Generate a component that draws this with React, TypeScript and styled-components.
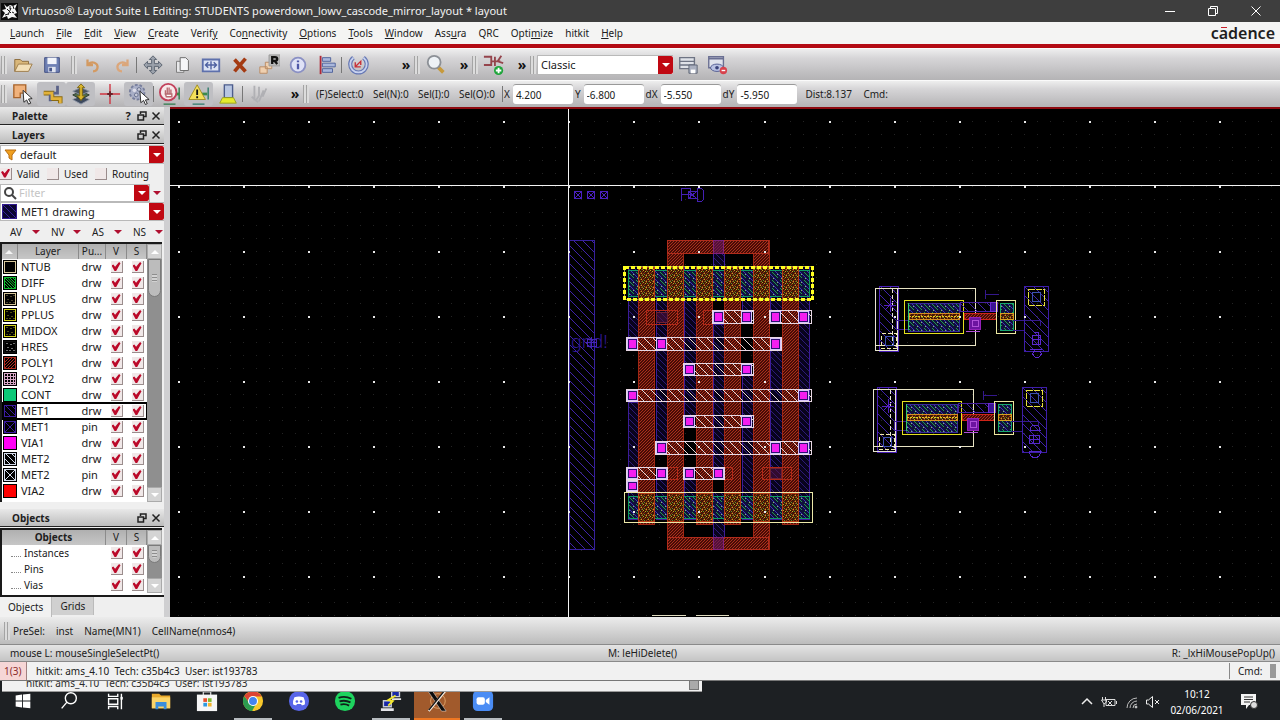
import React from "react";
import styled, { createGlobalStyle, css } from "styled-components";

const GlobalStyle = createGlobalStyle`
  * { box-sizing: border-box; }
  html, body { margin: 0; padding: 0; }
  body, button, input, select {
    font-family: "Noto Sans", "Open Sans", sans-serif;
    font-size: 10px;
    line-height: 16px;
    color: #202020;
  }
  button { border: 0; padding: 0; background: none; }
`;

const Screen = styled.div`
  display: flex;
  flex-direction: column;
  height: 100vh;
  overflow: hidden;
  background: #ececec;
`;

/* ---------- window title and menus ---------- */

const TitleBar = styled.header`
  display: flex;
  align-items: center;
  flex: none;
  height: 22px;
  padding: 0 5px 0 1px;
  gap: 4px;
  background: #3e3e3e;
  color: #f2f2f2;
`;

const Title = styled.h1`
  flex: 1;
  margin: 0;
  font-size: 11px;
  font-weight: 400;
  white-space: nowrap;
`;

const WindowButton = styled.button`
  display: flex;
  align-items: center;
  justify-content: center;
  width: 39px;
  height: 20px;
  color: #fff;
`;

const MenuBar = styled.nav`
  display: flex;
  align-items: center;
  flex: none;
  height: 26px;
  padding: 0 5px 0 4px;
  background: #f4f4f3;
  border-bottom: 4px solid #b30a14;
`;

const MenuButton = styled.button`
  padding: 0 6px;
  line-height: 20px;
  white-space: nowrap;
`;

const Logo = styled.span`
  position: relative;
  margin-left: auto;
  font-size: 16px;
  font-weight: 600;
  line-height: 22px;
  color: #1e1e1e;
  &::after {
    content: "";
    position: absolute;
    left: 10px;
    top: 5px;
    width: 6px;
    height: 1px;
    background: #c8202c;
  }
`;

/* ---------- tool bars ---------- */

const ToolBar = styled.div<{ $h: number }>`
  display: flex;
  align-items: center;
  flex: none;
  height: ${(p) => p.$h}px;
  background: linear-gradient(#eeeeee, #d6d5d7 30%, #b4b3b5);
  border-top: 1px solid #fafafa;
`;

const ToolGroup = styled.div<{ $w?: number; $gap?: number }>`
  display: flex;
  align-items: center;
  flex: none;
  gap: ${(p) => p.$gap ?? 0}px;
  ${(p) => p.$w && css`width: ${p.$w}px;`}
`;

const Grip = styled.span`
  flex: none;
  width: 6px;
  height: 18px;
  margin: 0 1px;
  background: repeating-linear-gradient(90deg, #a4a4a4 0 1px, #dcdcdc 1px 3px);
`;

const Divider = styled.span`
  flex: none;
  width: 1px;
  height: 16px;
  margin: 0 1px 0 0;
  background: #777;
`;

const ToolButton = styled.button<{ $on?: boolean }>`
  display: flex;
  align-items: center;
  justify-content: center;
  flex: none;
  width: 29px;
  height: 24px;
  border-radius: 3px;
  background: ${(p) => (p.$on ? "#bfbfc3" : "none")};
`;

const MoreButton = styled.button`
  margin-left: auto;
  width: 14px;
  font-size: 14px;
  font-weight: 700;
  line-height: 18px;
  color: #111;
`;

const Readout = styled.span<{ $w: number }>`
  width: ${(p) => p.$w}px;
  white-space: nowrap;
`;

const Readings = styled.div`
  display: flex;
  padding-left: 6px;
`;

const CoordLabel = styled.label`
  display: flex;
  align-items: center;
  gap: 3px;
`;

const CoordInput = styled.input`
  width: 60px;
  height: 20px;
  padding: 0 3px;
  border: 0;
  border-top: 1px solid #999;
  border-radius: 3px;
  background: #fff;
`;

/* ---------- combo boxes ---------- */

const ComboFrame = styled.div<{ $h: number; $w?: number }>`
  display: flex;
  align-items: stretch;
  flex: none;
  height: ${(p) => p.$h}px;
  ${(p) => p.$w && css`width: ${p.$w}px;`}
  background: #fff;
  border: 1px solid #b9b9b9;
  border-right: 0;
`;

const Select = styled.select`
  flex: 1;
  min-width: 0;
  appearance: none;
  border: 0;
  padding: 0 0 0 3px;
  font-size: 11px;
  background: transparent;
`;

const RedArrow = styled.span`
  display: flex;
  align-items: center;
  align-self: stretch;
  justify-content: center;
  flex: none;
  width: 15px;
  border-radius: 0 2px 2px 0;
  background: #c00812;
  &::after {
    content: "";
    border: 4px solid transparent;
    border-top-color: #fff;
    border-bottom: 0;
  }
`;

const SmallArrow = styled.span`
  border: 4px solid transparent;
  border-top-color: #b01030;
  border-bottom: 0;
`;

/* ---------- left dock ---------- */

const Workspace = styled.main`
  display: flex;
  flex: 1;
  min-height: 0;
`;

const Dock = styled.aside`
  display: flex;
  flex-direction: column;
  flex: none;
  width: 170px;
  background: #efefef;
  border-right: 6px solid #cfcfd1;
`;

const DockHead = styled.div`
  display: flex;
  align-items: center;
  flex: none;
  height: 18px;
  margin-bottom: 1px;
  padding: 0 1px 0 12px;
  background: linear-gradient(#e8e8e8, #bdbdbd);
  border-bottom: 1px solid #222;
`;

const DockTitle = styled.h2`
  flex: 1;
  margin: 0;
  font-size: 10px;
  font-weight: 700;
`;

const DockButton = styled.button`
  display: flex;
  align-items: center;
  justify-content: center;
  width: 14px;
  height: 14px;
  font-size: 11px;
  font-weight: 700;
`;

const DockRow = styled.div<{ $h: number }>`
  display: flex;
  align-items: center;
  flex: none;
  height: ${(p) => p.$h}px;
`;

const CheckLabel = styled.label<{ $w: number }>`
  display: flex;
  align-items: center;
  gap: 5px;
  width: ${(p) => p.$w}px;
`;

const Check = styled.input`
  appearance: none;
  display: block;
  flex: none;
  width: 12px;
  height: 12px;
  margin: 0;
  padding: 1px;
  background: #f0e8e8;
  border: 0 solid #9a8c8c;
  border-width: 0 1px 1px 0;
  &:checked::before {
    content: "";
    display: block;
    width: 9px;
    height: 9px;
    background: #bb0a2a;
    clip-path: polygon(0 40%, 20% 28%, 40% 52%, 84% 0, 100% 14%, 52% 100%, 34% 100%);
  }
`;

const FilterBox = styled.label`
  display: flex;
  align-items: center;
  flex: 1;
  min-width: 0;
  height: 18px;
  padding-left: 2px;
  background: #fff;
  border: 1px solid #b9b9b9;
`;

const FilterInput = styled.input`
  flex: 1;
  min-width: 0;
  border: 0;
  padding: 0 2px;
  font-size: 11px;
  background: transparent;
  &::placeholder { color: #c4c4c4; }
`;

const VisButton = styled.button`
  display: flex;
  align-items: center;
  justify-content: space-between;
  width: 41px;
  padding: 0 1px 0 10px;
`;

const ListFrame = styled.div<{ $grow?: boolean }>`
  display: flex;
  flex: ${(p) => (p.$grow ? "1 1 0" : "none")};
  min-height: 0;
  overflow: hidden;
  padding-bottom: ${(p) => (p.$grow ? 0 : 2)}px;
  background: #fff;
  border-top: 2px solid #1a1a1a;
  border-left: 2px solid #1a1a1a;
  margin-right: 2px;
`;

const ListTable = styled.table`
  flex: 1;
  height: max-content;
  border-collapse: collapse;
  table-layout: fixed;
  width: 146px;
`;

const HeadCell = styled.th<{ $w?: number; $bold?: boolean }>`
  ${(p) => p.$w && css`width: ${p.$w}px;`}
  height: 15px;
  padding: 0;
  font-weight: ${(p) => (p.$bold ? 700 : 400)};
  line-height: 15px;
  background: linear-gradient(#b0b0b0, #c6c6c6);
  border-right: 1px solid #8b8b8b;
  overflow: hidden;
`;

const SortMark = styled.span`
  display: block;
  width: 8px;
  margin: 0 auto;
  border: 4px solid transparent;
  border-top: 0;
  border-bottom-color: #f4f4f4;
`;

const Row = styled.tr<{ $selected?: boolean }>`
  ${(p) => p.$selected && css`outline: 2px solid #000; outline-offset: -1px;`}
`;

const Cell = styled.td<{ $pad?: number }>`
  height: 16px;
  padding: 0 0 0 ${(p) => p.$pad ?? 0}px;
  font-size: 11px;
  line-height: 16px;
  white-space: nowrap;
`;

const TreeCell = styled(Cell)`
  font-size: 10px;
  &::before {
    content: "";
    display: inline-block;
    width: 10px;
    height: 4px;
    margin-right: 3px;
    border-bottom: 1px dotted #888;
    vertical-align: middle;
  }
`;

const ScrollTrack = styled.div`
  display: flex;
  flex-direction: column;
  flex: none;
  width: 15px;
  background: #8f8f8f;
`;

const ScrollButton = styled.button<{ $up?: boolean }>`
  display: flex;
  align-items: center;
  justify-content: center;
  height: 15px;
  background: #d4d4d4;
  border: 1px solid #aaa;
  ${(p) => !p.$up && css`margin-top: auto;`}
  &::after {
    content: "";
    border: 4px solid transparent;
    ${(p) => (p.$up ? css`border-bottom-color: #fff; border-top: 0;` : css`border-top-color: #fff; border-bottom: 0;`)}
  }
`;

const ScrollThumb = styled.div<{ $h: number }>`
  height: ${(p) => p.$h}px;
  margin: 0 1px;
  padding: ${(p) => (p.$h > 20 ? 14 : 4)}px 3px;
  background: repeating-linear-gradient(#8d8d8d 0 1px, #d2d2d2 1px 3px) content-box, #bcbcbc;
  border: 1px solid #7a7a7a;
  border-radius: 0 0 7px 7px;
`;

const Tabs = styled.div`
  display: flex;
  flex: none;
  height: 22px;
  border-top: 2px solid #1a1a1a;
`;

const Tab = styled.button<{ $active?: boolean }>`
  padding: 0 8px;
  height: ${(p) => (p.$active ? 20 : 18)}px;
  background: ${(p) => (p.$active ? "#f1f1f1" : "#d0d0d0")};
  border-right: 1px solid #bbb;
`;

const CanvasPane = styled.section`
  flex: 1;
  min-width: 0;
  background: #000;
  border-top: 2px solid #8e0a10;
  svg { display: block; width: 100%; height: 100%; }
`;

/* ---------- status lines ---------- */

const InfoBar = styled.div`
  display: flex;
  align-items: center;
  flex: none;
  height: 28px;
  padding-left: 3px;
  gap: 2px;
  background: linear-gradient(#ececec, #bcbcbc);
  border-bottom: 1px solid #8a8a8a;
`;

const InfoFields = styled.div`
  display: flex;
  gap: 11px;
`;

const MouseBar = styled.div`
  display: grid;
  grid-template-columns: 1fr auto 1fr;
  align-items: center;
  flex: none;
  height: 17px;
  padding: 0 5px 0 10px;
  background: linear-gradient(#e4e4e4, #c4c4c4);
  border-bottom: 1px solid #8a8a8a;
  span:last-child { text-align: right; }
`;

const StatusBar = styled.div`
  display: flex;
  align-items: center;
  flex: none;
  height: 19px;
  background: #f1f1f1;
  border-bottom: 1px solid #777;
`;

const Counter = styled.span`
  width: 27px;
  padding-left: 4px;
  margin-right: 9px;
  line-height: 18px;
  color: #8c2b2b;
  background: #f6d6d6;
  border-right: 1px solid #a08080;
`;

const CmdBox = styled.span`
  display: flex;
  align-items: center;
  margin-left: auto;
  width: 51px;
  padding-left: 8px;
  border-left: 1px solid #888;
  &::after {
    content: "";
    width: 6px;
    height: 14px;
    margin-left: auto;
    margin-right: 4px;
    background: #999;
  }
`;

/* ---------- task bar ---------- */

const TaskBar = styled.footer`
  position: relative;
  display: flex;
  align-items: center;
  flex: none;
  height: 39px;
  background: #1d2023;
  color: #f4f4f4;
`;

const BackWindow = styled.div`
  position: absolute;
  left: 2px;
  top: 0;
  width: 700px;
  height: 11px;
  display: flex;
  align-items: flex-end;
  overflow: hidden;
  padding-left: 24px;
  background: #f1f1f1;
  border-bottom: 1px solid #999;
  color: #2c2c2c;
  &::after {
    content: "";
    width: 8px;
    height: 8px;
    margin: 0 3px 1px auto;
    background: #aaa;
    border: 1px solid #777;
  }
`;

const TaskButton = styled.button<{ $state?: "open" | "active" }>`
  display: flex;
  align-items: center;
  justify-content: center;
  width: 46px;
  height: 39px;
  padding-top: 3px;
  border-bottom: 2px solid transparent;
  ${(p) => p.$state === "open" && css`
    background: linear-gradient(#b7bcc0, #b7bcc0) center bottom / 38px 2px no-repeat border-box;
  `}
  ${(p) => p.$state === "active" && css`background: #a15a2c; border-bottom-color: #ee7722;`}
`;

const Tray = styled.div`
  display: flex;
  align-items: center;
  margin-left: auto;
  padding: 2px 22px 0 0;
  gap: 6px;
`;

const Clock = styled.time`
  width: 60px;
  margin-right: 7px;
  color: #fff;
  text-align: center;
  white-space: pre-line;
`;

/* ---------- icons ---------- */

const glyphs: Record<string, React.ReactNode> = {
  open: (<><path d="M3 19V6h6l2 2h7v3" fill="#d9b77a" stroke="#8a6a3a" /><path d="M3 19l4-8h15l-4 8z" fill="#f2dfb8" stroke="#9a7a48" /></>),
  save: (<><path d="M4 4h16v16H4z" fill="#6f80b4" stroke="#3d4c80" /><path d="M7 4h10v7H7z" fill="#f2f4fa" /><path d="M8 14h8v6H8z" fill="#dfe3ee" /><path d="M9 15h3v4H9z" fill="#46558a" /></>),
  undo: (<path d="M6 6v6h6M7 11c4-4 10-1 10 3 0 3-2 5-5 5" fill="none" stroke="#d39a62" strokeWidth="2.500" />),
  redo: (<path d="M18 6v6h-6M17 11c-4-4-10-1-10 3 0 3 2 5 5 5" fill="none" stroke="#dba67a" strokeWidth="2.500" />),
  move: (<path d="M12 2l4 4h-2.500v4.500H18V8l4 4-4 4v-2.500h-4.500V18H16l-4 4-4-4h2.500v-4.500H6V16l-4-4 4-4v2.500h4.500V6H8z" fill="#9ba1ab" stroke="#59616e" />),
  copy: (<><path d="M6 8h8v12H6z" fill="#e8e8ea" stroke="#777" /><path d="M10 4h6l3 3v11h-9z" fill="#f6f6f8" stroke="#666" /></>),
  stretch: (<><path d="M3 6h18v13H3z" fill="#dce3f4" stroke="#5e70ac" strokeWidth="2" /><path d="M6 12h12M9 9l-3 3 3 3M15 9l3 3-3 3M12 8v9" fill="none" stroke="#4d60a0" strokeWidth="1.500" /></>),
  remove: (<path d="M6 6l12 13M18 5L6 19" stroke="#a43a12" strokeWidth="4" />),
  repeat: (<><path d="M2 14h8v7H2zM8 9h7v7H8z" fill="#efd0b0" stroke="#b98a60" /><path d="M12 1h12v12H12z" fill="#b9b9b9" stroke="#999" /><path d="M15.500 11V3.500h3q2.500 0 2.500 2t-2.500 2h-3M18 7.500l3 3.500" fill="none" stroke="#111" strokeWidth="2.500" /></>),
  info: (<><circle cx="12" cy="12" r="8" fill="#dfe2f6" stroke="#8a90c4" strokeWidth="2" /><path d="M12 10.500v6M12 7v2" stroke="#5058a8" strokeWidth="2.500" /></>),
  align: (<><path d="M5 2v20" stroke="#b02838" strokeWidth="2" /><path d="M7 4h9v4H7zM7 10h14v4H7zM7 16h11v4H7z" fill="#a9b7dc" stroke="#4c5f9a" /></>),
  rotate: (<><path d="M7 4a9 9 0 1 0 11 0" fill="none" stroke="#6577b4" strokeWidth="4.500" /><path d="M7 4a9 9 0 1 0 11 0" fill="none" stroke="#c8d2ee" strokeWidth="2" /><path d="M9 9v5h6M9 14l6-6v4" fill="none" stroke="#c83038" strokeWidth="1.500" /></>),
  zoom: (<><path d="M14 14l6 6" stroke="#c79a3c" strokeWidth="4" /><circle cx="10" cy="9" r="7" fill="#eef2f6" stroke="#8c9096" strokeWidth="2" /></>),
  wire: (<><path d="M1 3h8v9H1M9 8h10M13 3v10M20 2l-4 6 6 2" fill="none" stroke="#95444c" strokeWidth="2" /><circle cx="17" cy="18" r="5" fill="#1ea53a" /><path d="M14 18h6M17 15v6" stroke="#fff" strokeWidth="2" /></>),
  sheetSave: (<><path d="M3 4h16v12H3z" fill="#dfe2e8" stroke="#6e7484" strokeWidth="1.500" /><path d="M3 8h16M3 12h16" stroke="#6e7484" strokeWidth="1.500" /><path d="M13 12h9v9h-9z" fill="#aab0c0" stroke="#5d6474" /><path d="M15 17h5v4h-5z" fill="#fff" /></>),
  sheetEye: (<><path d="M3 3h16v12H3z" fill="#dfe2ec" stroke="#6a6f92" strokeWidth="1.500" /><path d="M3 5h16" stroke="#6a6f92" strokeWidth="2" /><ellipse cx="12" cy="15" rx="7" ry="4" fill="#b9c2e4" stroke="#4e588e" /><circle cx="12" cy="15" r="2" fill="#39427a" /><circle cx="19" cy="18" r="4" fill="#d8424c" /><path d="M17 18h4" stroke="#fff" strokeWidth="1.500" /></>),
  pick: (<><path d="M2 2h13v9H9v5H2z" fill="#f0b27c" stroke="#a8642c" strokeWidth="1.500" /><path d="M12 8l10 9-4 .5 2.500 4.500-2.500 1-2-4.500-3 2.500z" fill="#fff" stroke="#222" /></>),
  route: (<><path d="M3 11h9v6h9v5" fill="none" stroke="#8a6a10" strokeWidth="5" /><path d="M18 3v8h-8v9" fill="none" stroke="#5a6288" strokeWidth="3" /><path d="M3 11h9v6h9v5" fill="none" stroke="#e2b23a" strokeWidth="3" /></>),
  layers: (<><path d="M12 14l9 4-9 5-9-5z" fill="#3e4a5e" stroke="#8a93a4" /><path d="M12 9l9 4-9 5-9-5z" fill="#4e6a4e" stroke="#2c3a2c" /><path d="M12 5l9 4-9 4-9-4z" fill="#4a5460" stroke="#8a93a4" /><path d="M12 1l4 4h-2.500v9H16l-4 5-4-5h2.500V5H8z" fill="#d9b52c" stroke="#7a6412" /></>),
  cross: (<><path d="M12 1v22M1 12h22" stroke="#cf3440" strokeWidth="1.500" /><path d="M9 12h6M12 9v6" stroke="#6a2028" strokeWidth="2" /></>),
  gear: (<><circle cx="10" cy="10" r="8" fill="#a8aec6" stroke="#777e9c" strokeDasharray="3 2" strokeWidth="2" /><circle cx="7" cy="8" r="2" fill="#dcdce8" /><circle cx="12" cy="7" r="2" fill="#c8cad8" stroke="#666e8c" /><circle cx="9" cy="13" r="2" fill="#c8cad8" stroke="#666e8c" /><path d="M13 9l10 9-4 .5 2 4-2 1-2-4.500-3 2.500z" fill="#fff" stroke="#222" /></>),
  stop: (<><path d="M22 5v13M5 23h13" stroke="#2d7a4a" strokeWidth="1.500" /><path d="M17 12h5" stroke="#3b8a4a" strokeWidth="3" /><circle cx="10" cy="10" r="9" fill="#f7e9ea" stroke="#c2405a" strokeWidth="2" /><path d="M7 13V8M9 12V5M11 12V5M13 12V7M7 12h7v3h-6z" stroke="#b86a70" strokeWidth="1.500" fill="#fff" /></>),
  warn: (<><path d="M22 5v13M5 23h13" stroke="#2d7a6a" strokeWidth="1.500" /><path d="M15 12h6" stroke="#3b8a4a" strokeWidth="3" /><path d="M10 2l9 16H1z" fill="#f5e05a" stroke="#a08c1c" /><path d="M10 7v6M10 14.500v2" stroke="#111" strokeWidth="2" /></>),
  marker: (<><path d="M8 2h9v14H8z" fill="#b8c6e2" stroke="#4c5c8c" strokeWidth="1.500" /><path d="M6 16h12l3 6H3z" fill="#e6ea2c" stroke="#98a01c" /></>),
  pens: (<path d="M7 3v16M4 15l7 6M12 4v10l-4 6M17 8l-5 12M20 6l-4 9" fill="none" stroke="#b0b0b4" strokeWidth="2" />),
};

function Glyph({ name, size = 22 }: { name: string; size?: number }) {
  return <svg width={size} height={size} viewBox="0 0 24 24" aria-hidden="true">{glyphs[name]}</svg>;
}

function Tool({ name, on }: { name: string; on?: boolean }) {
  return <ToolButton $on={on} aria-label={name}><Glyph name={name} /></ToolButton>;
}

const FloatIcon = () => (
  <svg width="10" height="10" viewBox="0 0 10 10" fill="none" stroke="#222" strokeWidth="1.500">
    <path d="M3.500 3V1H9v4.500H7M1 4h5.500v5H1z" />
  </svg>
);
const CloseIcon = () => (
  <svg width="10" height="10" viewBox="0 0 10 10" stroke="#222" strokeWidth="1.500"><path d="M1.500 1.500l7 7M8.500 1.500l-7 7" /></svg>
);

/* ---------- layer list ---------- */

type Fill = "box" | "slash" | "back" | "dots" | "grid" | "solid" | "x";
const layers: { name: string; purpose: string; color: string; fill: Fill; edge?: string }[] = [
  { name: "NTUB", purpose: "drw", color: "#000", fill: "box", edge: "#d8c89c" },
  { name: "DIFF", purpose: "drw", color: "#10c030", fill: "back" },
  { name: "NPLUS", purpose: "drw", color: "#8a8450", fill: "dots", edge: "#d8c89c" },
  { name: "PPLUS", purpose: "drw", color: "#a0a020", fill: "dots", edge: "#d8d820" },
  { name: "MIDOX", purpose: "drw", color: "#a0a020", fill: "dots", edge: "#d8d820" },
  { name: "HRES", purpose: "drw", color: "#e0e0e0", fill: "dots", edge: "#111" },
  { name: "POLY1", purpose: "drw", color: "#b02c20", fill: "slash" },
  { name: "POLY2", purpose: "drw", color: "#d8a8c8", fill: "grid" },
  { name: "CONT", purpose: "drw", color: "#0cc878", fill: "solid" },
  { name: "MET1", purpose: "drw", color: "#3c1ca0", fill: "back" },
  { name: "MET1", purpose: "pin", color: "#3c1ca0", fill: "x" },
  { name: "VIA1", purpose: "drw", color: "#ff00f4", fill: "solid" },
  { name: "MET2", purpose: "drw", color: "#d4dcec", fill: "back" },
  { name: "MET2", purpose: "pin", color: "#d4dcec", fill: "x" },
  { name: "VIA2", purpose: "drw", color: "#ff0000", fill: "solid" },
];

function Swatch({ name, color, fill, edge = color }: { name: string; color: string; fill: Fill; edge?: string }) {
  const marks: Record<Fill, string> = {
    box: "",
    slash: "M1 6l5-5M1 9l8-8M1 12L12 1M4 12l8-8M7 12l5-5",
    back: name === "DIFF" ? "M6 1l6 6M3.500 1l8.500 8.500M1 1l11 11M1 4l8 8M1 7l5 5M9 1l3 3" : "M2 1l10 10M1 6l6 6M8 1l4 4",
    dots: "M3 3h1M7 4h1M10 3h1M4 7h1M8 8h1M3 10h1M10 10h1M6 10h1",
    grid: "M4 1v11M7 1v11M10 1v11M1 4h11M1 7h11M1 10h11",
    solid: "",
    x: "M1 1l11 11M12 1L1 12",
  };
  return (
    <svg width="14" height="14" viewBox="0 0 14 14">
      <rect width="14" height="14" fill="#000" />
      <rect x="1.500" y="1.500" width="11" height="11" fill={fill === "solid" ? color : "#000"} stroke={edge} />
      <path d={marks[fill]} transform="translate(.5 .5)" stroke={color} fill="none" />
    </svg>
  );
}

const SwatchCell = styled(Cell)`
  svg { display: block; margin: 0 auto; }
`;

/* ---------- drawing area ---------- */

const ORIGIN_X = 178;
const ORIGIN_Y = 121;
const MAJOR = 65.06;

function dots(step: number, size: number) {
  let d = "";
  for (let y = ORIGIN_Y - MAJOR; y < 620; y += step)
    for (let x = ORIGIN_X - MAJOR; x < 1282; x += step)
      d += `M${Math.round(x)} ${Math.round(y)}h${size}v${size}h-${size}z`;
  return d;
}
const minorDots = dots(MAJOR / 5, 1);
const majorDots = dots(MAJOR, 2);

const R = ({ b, ...p }: { b: [number, number, number, number] } & React.SVGProps<SVGRectElement>) => (
  <rect x={b[0] + 0.5} y={b[1] + 0.5} width={b[2] - b[0]} height={b[3] - b[1]} {...p} />
);

const polyColumns: [number, number, number][] = [
  [638, 266, 524], [667, 240, 549], [696, 266, 524], [724, 266, 524], [753, 240, 549], [782, 266, 524],
];
const metalColumns: [number, number, number, number][] = [
  [628, 638, 266, 337], [628, 638, 402, 519], [656, 667, 266, 441], [656, 667, 479, 519],
  [684, 696, 266, 363], [684, 696, 375, 416], [684, 696, 479, 519], [713, 724, 240, 300], [713, 724, 324, 468], [713, 724, 492, 549],
  [742, 753, 266, 311], [742, 753, 375, 519], [770, 782, 266, 311], [770, 782, 350, 441], [770, 782, 454, 519],
  [798, 809, 266, 519],
];
const straps: { x: [number, number]; y: number; h: number; vias: number[] }[] = [
  { x: [712, 753], y: 310, h: 13, vias: [713, 741] },
  { x: [769, 811], y: 310, h: 13, vias: [770, 798] },
  { x: [626, 781], y: 337, h: 13, vias: [627, 656, 770] },
  { x: [683, 753], y: 363, h: 12, vias: [684, 741] },
  { x: [626, 811], y: 389, h: 12, vias: [627, 798] },
  { x: [683, 753], y: 415, h: 12, vias: [684, 741] },
  { x: [655, 811], y: 441, h: 13, vias: [656, 770, 798] },
  { x: [626, 667], y: 467, h: 12, vias: [627, 656] },
  { x: [683, 724], y: 467, h: 12, vias: [684, 713] },
  { x: [626, 637], y: 480, h: 11, vias: [627] },
];

function Device({ y, y2 }: { y: number; y2: number }) {
  return (
    <g>
      <R b={[628, y, 809, y2]} fill="url(#diff)" stroke="#0c9a62" />
      {polyColumns.map(([x]) => (
        <R key={x} b={[x, y - 3, x + 16, y2 + 3]} fill="url(#gate)" stroke="#b83c14" />
      ))}
    </g>
  );
}

function PairCell({ dx, dy, lower }: { dx: number; dy: number; lower?: boolean }) {
  return (
    <g transform={`translate(${dx} ${dy})`} fill="none">
      <R b={[879, 286, 898, 351]} fill="url(#met)" stroke="#4a20b8" />
      <R b={[875, 288, 975, 345]} stroke="#e8e4c4" />
      <path d="M875.500 288v62.500h22V288" stroke="#e8e4d4" />
      <path d="M892.500 289v56" stroke="#e8e4d4" strokeDasharray="4 2" />
      <R b={[881, 333, 896, 348]} stroke="#f0e8b0" strokeDasharray="4 2" />
      <R b={[885, 336, 893, 345]} fill="url(#met)" stroke="#3c50b0" />
      <path d="M884 305h12M890 298v14M885 300l10 10M895 300l-10 10" stroke="#5420c0" />
      <R b={[896, 320, 908, 329]} stroke="#3a1a90" />
      <R b={[904, 300, 963, 333]} stroke="#e4e020" />
      <R b={[908, 303, 959, 331]} fill="url(#diff)" stroke="#3a2a9c" />
      <path d="M908.500 303v27" stroke="#30c870" />
      <R b={[909, 313, 959, 319]} fill="url(#gate)" stroke="#d88c20" />
      <path d="M909 316.500h50" stroke="#e8c820" strokeDasharray="2 1" />
      <R b={[960, 302, 994, 311]} fill="url(#met)" stroke="#46209c" />
      <R b={[964, 313, 996, 319]} fill="url(#poly)" stroke="#d02418" />
      <R b={[969, 317, 980, 329]} fill="#6c14a0" stroke="#9420b8" />
      <path d="M972 320v6h6v-6zM966 331h14" stroke="#b050d8" />
      <R b={[990, 302, 997, 311]} fill="#3a1494" stroke="#6c2cd0" />
      <R b={[996, 300, 1015, 333]} stroke="#ece8a0" />
      <R b={[1000, 303, 1013, 330]} fill="url(#diff)" stroke="#18a870" />
      <R b={[1000, 313, 1013, 319]} fill="url(#gate)" stroke="#d8a020" />
      <path d="M985.500 290v9M986 294.500h13M1013 320.500h11v10h-11M1020 320.500h20v5" stroke="#34188c" />
      <R b={[1024, 286, 1048, 351]} fill="url(#met)" stroke="#3e1ea8" />
      <R b={[1028, 289, 1044, 305]} stroke="#e8e040" strokeDasharray="6 1" />
      <R b={[1032, 292, 1040, 301]} fill="url(#met)" stroke="#3c50b0" />
      {lower ? (
        <path d="M1032 329h10a5 5 0 0 0-10 0M1031 334h10v8h-10zM1031 338h10M1035 334v8M1032 350a5 5 0 0 0 10 3v-3z" stroke="#5428c8" />
      ) : (
        <path d="M1032 335h8v9h-8zM1034 332h4v12M1032 339h8M1030 349h12M1034 351a4 4 0 1 0 6 0z" stroke="#5c28cc" />
      )}
    </g>
  );
}

function LayoutView() {
  return (
    <svg viewBox="170 109 1110 508" preserveAspectRatio="xMinYMin slice" role="img" aria-label="Layout drawing" shapeRendering="crispEdges">
      <defs>
        <pattern id="met" width="9" height="9" patternUnits="userSpaceOnUse">
          <path d="M0 0l9 9" stroke="#3f22a8" />
        </pattern>
        <pattern id="metDense" width="6" height="6" patternUnits="userSpaceOnUse">
          <rect width="6" height="6" fill="#08031c" />
          <path d="M0 0l6 6" stroke="#2c1a78" />
        </pattern>
        <pattern id="poly" width="3" height="3" patternUnits="userSpaceOnUse">
          <rect width="3" height="3" fill="#480c06" />
          <path d="M0 3l3-3" stroke="#a8301c" />
        </pattern>
        <pattern id="strap" width="9" height="9" patternUnits="userSpaceOnUse">
          <path d="M0 0l9 9" stroke="#ecd8d8" />
        </pattern>
        <pattern id="diff" width="8" height="8" patternUnits="userSpaceOnUse">
          <rect width="8" height="8" fill="#10103c" />
          <path d="M0 0l8 8" stroke="#3c32b4" />
          <path d="M4 0l4 4M0 4l2 2" stroke="#20a048" />
          <path d="M5 6h1M1 2h1" stroke="#80c860" />
        </pattern>
        <pattern id="gate" width="7" height="6" patternUnits="userSpaceOnUse">
          <rect width="7" height="6" fill="#401606" />
          <path d="M0 3l3-3M1 6l6-6M4 6l3-3" stroke="#8e3a14" />
          <path d="M1 1.500h1M4 3.500h1M2 5.500h1M6 .5h1" stroke="#c0a420" />
          <path d="M3 1.500h1M5 5.500h1M0 4.500h1" stroke="#549a2c" />
        </pattern>
      </defs>
      <path d={minorDots} fill="#242424" />
      <R b={[569, 240, 594, 549]} fill="url(#met)" stroke="#36209c" />
      <g fill="none" stroke="#4a20c0">
        {[574, 587, 600].map((x) => (
          <path key={x} d={`M${x}.500 191.500h7v7h-7zM${x + 1} 192l6 6M${x + 7} 192l-6 6`} />
        ))}
        <path d="M681.500 188v13M681 194.500h10M690.500 188v11M681 188.500h9M697.500 188.500h4l2 2v9l-2 2h-4zM688 191.500h9v7h-9zM689 192l7 6M696 192l-7 6" stroke="#4420b4" />
      </g>
      <text x="571" y="348" fontSize="18" fontFamily="Noto Sans" fontWeight="300" fill="#34199a">gnd!</text>
      <path d="M587 339h9v7h-9zM591 337v11M586 342h11" stroke="#4624b4" fill="none" />

      {metalColumns.map(([x, x2, y, y2]) => (
        <R key={`${x}-${y}`} b={[x, y, x2, y2]} fill="url(#metDense)" stroke="#3c1c98" />
      ))}
      {polyColumns.map(([x, y, y2]) => (
        <R key={x} b={[x, y, x + 16, y2]} fill="url(#poly)" stroke="#a02614" />
      ))}
      <R b={[667, 240, 768, 253]} fill="url(#poly)" stroke="#b02c1c" />
      <R b={[667, 537, 768, 549]} fill="url(#poly)" stroke="#b02c1c" />
      <R b={[713, 240, 723, 253]} fill="#5c1460" fillOpacity={0.6} stroke="#80207c" />
      <R b={[713, 537, 723, 549]} fill="#5c1460" fillOpacity={0.6} stroke="#80207c" />
      <g fill="none" stroke="#b02818">
        <R b={[646, 310, 677, 324]} />
        <R b={[656, 312, 667, 322]} fill="#5c1440" fillOpacity={0.5} stroke="#702030" />
        <R b={[703, 310, 712, 324]} />
        <R b={[667, 467, 677, 479]} />
        <R b={[724, 467, 732, 479]} />
        <R b={[762, 467, 791, 479]} />
        <R b={[770, 468, 781, 478]} fill="#5c1440" fillOpacity={0.5} stroke="#702030" />
      </g>
      <Device y={270} y2={296} />
      <Device y={496} y2={518} />
      <R b={[624, 266, 812, 299]} fill="none" stroke="#a09c40" />
      <R b={[624, 267, 812, 299]} fill="none" stroke="#ffff20" strokeWidth={3} strokeDasharray="4 2" />
      <R b={[624, 492, 812, 522]} fill="none" stroke="#ece8a8" />
      {straps.map((s) => (
        <g key={`${s.x[0]}-${s.y}`}>
          <R b={[s.x[0], s.y, s.x[1], s.y + s.h]} fill="url(#strap)" stroke="#e8d8e4" />
          {s.vias.map((v) => (
            <g key={v}>
              <R b={[v, s.y + 1, v + 10, s.y + s.h - 1]} fill="#2c1070" stroke="#d8c4fc" />
              <R b={[v + 2, s.y + 3, v + 8, s.y + s.h - 3]} fill="#f41ef0" stroke="#f41ef0" />
            </g>
          ))}
        </g>
      ))}
      <PairCell dx={0} dy={0} />
      <PairCell dx={-2} dy={101} lower />
      <path d="M652 615.500h34M696 615.500h33" stroke="#e0dcc0" />
      <path d={majorDots} fill="#e8e8e8" />
      <path d="M568.500 109v508M170 185.500h1110" stroke="#f4f4f4" />
    </svg>
  );
}

/* ---------- task bar icons ---------- */

const taskIcons: { label: string; state?: "open" | "active"; art: React.ReactNode }[] = [
  { label: "Start", art: <path d="M4 6l7-1v6.500H4zM12 5l8-1v7.500h-8zM4 12.500h7V19l-7-1zM12 12.500h8V20l-8-1z" fill="#fff" /> },
  { label: "Search", art: <g fill="none" stroke="#fff" strokeWidth="1.500"><circle cx="14" cy="9" r="6" /><path d="M10 13l-6 7" /></g> },
  { label: "Task View", art: <g fill="none" stroke="#fff" strokeWidth="1.500"><path d="M5 4v3h10V4M5 9.500h10v6H5zM5 21v-3h10v3M19 4v17" /><path d="M18 9h2.500" strokeWidth="3" /></g> },
  { label: "File Explorer", art: <><path d="M2 4h8l2 2h10v14H2z" fill="#e9a92c" /><path d="M2 8h20v12H2z" fill="#fbd468" /><path d="M6 13h12v8h-3v-3H9v3H6z" fill="#3a8ddb" /></> },
  { label: "Store", art: <><path d="M8 8V2h8v6" fill="none" stroke="#ccc" strokeWidth="1.500" /><path d="M1 5h22v18H1z" fill="#f6f6f6" /><path d="M8 9h4v4H8z" fill="#e8502c" /><path d="M13 9h4v4h-4z" fill="#7cb82c" /><path d="M8 14h4v4H8z" fill="#2c98e0" /><path d="M13 14h4v4h-4z" fill="#f4b42c" /></> },
  { label: "Chrome", state: "open", art: <><circle cx="12" cy="12" r="11" fill="#f8c82c" /><path d="M2.500 6.500A11 11 0 0 0 11 23l5-9-8 0z" fill="#2c9c50" /><path d="M2.500 6.500A11 11 0 0 1 21.500 7H12L8 14z" fill="#dc4434" /><circle cx="12" cy="12" r="5.500" fill="#fff" /><circle cx="12" cy="12" r="4.300" fill="#4484f0" /></> },
  { label: "Discord", art: <><circle cx="12" cy="12" r="11" fill="#5865e8" /><path d="M7 8q5-2 10 0 2 4 1.500 7.500-2 1.500-3.500 1l-.8-1.300h-4.400L9 16.500q-2 .3-3.500-1Q5 12 7 8z" fill="#fff" /><circle cx="9.700" cy="12.500" r="1.400" fill="#5865e8" /><circle cx="14.300" cy="12.500" r="1.400" fill="#5865e8" /></> },
  { label: "Spotify", art: <><circle cx="12" cy="12" r="11" fill="#1ed35e" /><path d="M5 8.500q7-2.500 14 1M6 12.500q6-2 12 1M7 16q5-1.500 9.500 1" fill="none" stroke="#10201a" strokeWidth="2" /></> },
  { label: "PuTTY", state: "open", art: <><path d="M12 0h10v8H12zM3 11h10v8H3z" fill="#c8ccd4" /><path d="M13.500 1.500h7v5h-7zM4.500 12.500h7v5h-7z" fill="#1828a8" /><path d="M1 20h14v3H1zM13 9h10v2H13z" fill="#e4e4e8" /><path d="M17 6l-8 5 5 1-5 5" fill="none" stroke="#f4e82c" strokeWidth="2" /></> },
  { label: "X Server", state: "active", art: <><circle cx="13" cy="12" r="8" fill="none" stroke="#e0a468" /><path d="M2 1h5l15 22h-5z" fill="#0c0c0c" stroke="#fff" strokeWidth=".5" /><path d="M21 1L3 23" stroke="#f4ede4" strokeWidth="2.500" /><path d="M20 1L3 22" stroke="#111" strokeWidth="1.500" /></> },
  { label: "Zoom", state: "open", art: <><rect x="1" y="1" width="22" height="22" rx="5" fill="#4a8cf4" /><rect x="5" y="8" width="9" height="8" rx="2" fill="#fff" /><path d="M15 11l4-3v8l-4-3z" fill="#fff" /></> },
];

const menus: [string, string, string][] = [
  ["", "L", "aunch"], ["", "F", "ile"], ["", "E", "dit"], ["", "V", "iew"], ["", "C", "reate"], ["Verif", "y", ""],
  ["Co", "n", "nectivity"], ["", "O", "ptions"], ["", "T", "ools"], ["", "W", "indow"], ["Ass", "u", "ra"], ["QRC", "", ""],
  ["Opti", "m", "ize"], ["hitkit", "", ""], ["", "H", "elp"],
];

export default function App() {
  return (
    <Screen>
      <GlobalStyle />
      <TitleBar>
        <svg width="17" height="17" viewBox="0 0 17 17" aria-hidden="true">
          <rect width="17" height="17" fill="#0a0a0a" />
          <path d="M3 1l3 3 3-2 3 1 4-2-2 5 2 4-3 1 3 4-5-1-4 2-1-3-5 2 3-5-3-3 4-1z" fill="#f4f4f4" />
          <path d="M6 6l4 4M10 5l-3 7M12 3l1 3M4 12l3-1M9 3v3M11 9l2 1" stroke="#111" />
        </svg>
        <Title>Virtuoso® Layout Suite L Editing: STUDENTS powerdown_lowv_cascode_mirror_layout * layout</Title>
        <WindowButton aria-label="Minimize"><svg width="10" height="10"><path d="M0 5.500h10" stroke="#fff" /></svg></WindowButton>
        <WindowButton aria-label="Restore"><svg width="10" height="10" fill="none" stroke="#fff"><path d="M2.500 2V.5h7v7H8M.5 2.500h7v7h-7z" /></svg></WindowButton>
        <WindowButton aria-label="Close"><svg width="10" height="10" stroke="#fff"><path d="M.5.500l9 9M9.500.500l-9 9" /></svg></WindowButton>
      </TitleBar>
      <MenuBar>
        {menus.map(([a, u, b]) => (
          <MenuButton key={a + u + b}>{a}{u && <u>{u}</u>}{b}</MenuButton>
        ))}
        <Logo>cadence</Logo>
      </MenuBar>

      <ToolBar $h={32}>
        <ToolGroup $w={70}><Grip /><Tool name="open" /><Tool name="save" /></ToolGroup>
        <ToolGroup $w={343}>
          <Grip /><Tool name="undo" /><Tool name="redo" /><Divider />
          <Tool name="move" /><Tool name="copy" /><Tool name="stretch" /><Tool name="remove" /><Tool name="repeat" /><Tool name="info" /><Tool name="align" />
          <Divider /><Tool name="rotate" /><MoreButton aria-label="More edit tools">»</MoreButton>
        </ToolGroup>
        <ToolGroup $w={58}><Grip /><Tool name="zoom" /><MoreButton aria-label="More zoom tools">»</MoreButton></ToolGroup>
        <ToolGroup $w={58}><Grip /><Tool name="wire" /><MoreButton aria-label="More wire tools">»</MoreButton></ToolGroup>
        <ToolGroup>
          <Grip />
          <ComboFrame $h={20} $w={136}>
            <Select aria-label="Workspace" defaultValue="Classic"><option>Classic</option></Select>
            <RedArrow />
          </ComboFrame>
          <Tool name="sheetSave" /><Tool name="sheetEye" />
        </ToolGroup>
      </ToolBar>

      <ToolBar $h={27}>
        <ToolGroup $w={302}>
          <Grip /><Tool name="pick" /><Tool name="route" on /><Tool name="layers" on /><Tool name="cross" /><Tool name="gear" on /><Divider />
          <Tool name="stop" /><Tool name="warn" on /><Tool name="marker" /><Divider /><Tool name="pens" />
          <MoreButton aria-label="More options">»</MoreButton>
        </ToolGroup>
        <ToolGroup $w={200}>
          <Grip />
          <Readings>
            <Readout $w={57}>(F)Select:0</Readout><Readout $w={45}>Sel(N):0</Readout><Readout $w={41}>Sel(I):0</Readout><Readout $w={41}>Sel(O):0</Readout>
          </Readings>
        </ToolGroup>
        <Divider />
        <ToolGroup $gap={2}>
          <CoordLabel>X<CoordInput defaultValue="4.200" /></CoordLabel>
          <CoordLabel>Y<CoordInput defaultValue="-6.800" /></CoordLabel>
          <CoordLabel>dX<CoordInput defaultValue="-5.550" /></CoordLabel>
          <CoordLabel>dY<CoordInput defaultValue="-5.950" /></CoordLabel>
          <Readings><Readout $w={58}>Dist:8.137</Readout><Readout $w={40}>Cmd:</Readout></Readings>
        </ToolGroup>
      </ToolBar>

      <Workspace>
        <Dock>
          <DockHead>
            <DockTitle>Palette</DockTitle>
            <DockButton aria-label="Help">?</DockButton>
            <DockButton aria-label="Float palette"><FloatIcon /></DockButton>
            <DockButton aria-label="Close palette"><CloseIcon /></DockButton>
          </DockHead>
          <DockHead>
            <DockTitle>Layers</DockTitle>
            <DockButton aria-label="Float layers"><FloatIcon /></DockButton>
            <DockButton aria-label="Close layers"><CloseIcon /></DockButton>
          </DockHead>
          <ComboFrame $h={19}>
            <svg width="16" height="17" viewBox="0 0 16 17"><path d="M4 4h11l-4 5v5l-3-2V9z" fill="#f0a020" stroke="#b86c10" /></svg>
            <Select aria-label="Layer set" defaultValue="default"><option>default</option></Select>
            <RedArrow />
          </ComboFrame>
          <DockRow $h={19}>
            <CheckLabel $w={47}><Check type="checkbox" defaultChecked />Valid</CheckLabel>
            <CheckLabel $w={48}><Check type="checkbox" />Used</CheckLabel>
            <CheckLabel $w={64}><Check type="checkbox" />Routing</CheckLabel>
          </DockRow>
          <DockRow $h={19}>
            <FilterBox>
              <svg width="14" height="14" viewBox="0 0 14 14" fill="none" stroke="#444" strokeWidth="2"><circle cx="6" cy="6" r="4" /><path d="M9 9l4 4" /></svg>
              <FilterInput placeholder="Filter" aria-label="Filter" />
              <RedArrow />
            </FilterBox>
            <DockButton aria-label="Filter options"><SmallArrow /></DockButton>
          </DockRow>
          <ComboFrame $h={19}>
            <svg width="17" height="17" viewBox="0 0 17 17"><rect x="1.500" y="1.500" width="14" height="14" fill="#0a0430" stroke="#301890" /><path d="M2 2l13 13M8 2l7 7M2 8l7 7" stroke="#34209c" /></svg>
            <Select aria-label="Active layer" defaultValue="MET1 drawing"><option>MET1 drawing</option></Select>
            <RedArrow />
          </ComboFrame>
          <DockRow $h={21}>
            {["AV", "NV", "AS", "NS"].map((t) => <VisButton key={t}>{t}<SmallArrow /></VisButton>)}
          </DockRow>
          <ListFrame $grow>
            <ListTable>
              <thead>
                <tr><HeadCell $w={15} aria-label="Pattern"><SortMark /></HeadCell><HeadCell>Layer</HeadCell><HeadCell $w={27}>Pu...</HeadCell><HeadCell $w={21}>V</HeadCell><HeadCell $w={20}>S</HeadCell></tr>
              </thead>
              <tbody>
                {layers.map((l) => (
                  <Row key={l.name + l.purpose} $selected={l.name === "MET1" && l.purpose === "drw"}>
                    <SwatchCell><Swatch name={l.name} color={l.color} fill={l.fill} edge={l.edge} /></SwatchCell>
                    <Cell $pad={4}>{l.name}</Cell>
                    <Cell $pad={3}>{l.purpose}</Cell>
                    <Cell $pad={5}><Check type="checkbox" defaultChecked aria-label={`${l.name} ${l.purpose} visible`} /></Cell>
                    <Cell $pad={5}><Check type="checkbox" defaultChecked aria-label={`${l.name} ${l.purpose} selectable`} /></Cell>
                  </Row>
                ))}
              </tbody>
            </ListTable>
            <ScrollTrack><ScrollButton $up aria-label="Scroll up" /><ScrollThumb $h={38} /><ScrollButton aria-label="Scroll down" /></ScrollTrack>
          </ListFrame>
          <DockRow $h={7} />
          <DockHead>
            <DockTitle>Objects</DockTitle>
            <DockButton aria-label="Float objects"><FloatIcon /></DockButton>
            <DockButton aria-label="Close objects"><CloseIcon /></DockButton>
          </DockHead>
          <ListFrame>
            <ListTable>
              <thead>
                <tr><HeadCell $bold>Objects</HeadCell><HeadCell $w={21}>V</HeadCell><HeadCell $w={20}>S</HeadCell></tr>
              </thead>
              <tbody>
                {["Instances", "Pins", "Vias"].map((o) => (
                  <tr key={o}>
                    <TreeCell $pad={9}>{o}</TreeCell>
                    <Cell $pad={5}><Check type="checkbox" defaultChecked aria-label={`${o} visible`} /></Cell>
                    <Cell $pad={5}><Check type="checkbox" defaultChecked aria-label={`${o} selectable`} /></Cell>
                  </tr>
                ))}
              </tbody>
            </ListTable>
            <ScrollTrack><ScrollButton $up aria-label="Scroll up" /><ScrollThumb $h={18} /><ScrollButton aria-label="Scroll down" /></ScrollTrack>
          </ListFrame>
          <Tabs><Tab $active>Objects</Tab><Tab>Grids</Tab></Tabs>
        </Dock>
        <CanvasPane><LayoutView /></CanvasPane>
      </Workspace>

      <InfoBar>
        <Grip />
        <InfoFields><span>PreSel:</span><span>inst</span><span>Name(MN1)</span><span>CellName(nmos4)</span></InfoFields>
      </InfoBar>
      <MouseBar><span>mouse L: mouseSingleSelectPt()</span><span>M: leHiDelete()</span><span>R: _lxHiMousePopUp()</span></MouseBar>
      <StatusBar>
        <Counter>1(3)</Counter>
        <span>hitkit: ams_4.10&nbsp; Tech: c35b4c3&nbsp; User: ist193783</span>
        <CmdBox>Cmd:</CmdBox>
      </StatusBar>
      <TaskBar>
        {taskIcons.map((t) => (
          <TaskButton key={t.label} aria-label={t.label} $state={t.state}>
            <svg width="22" height="22" viewBox="0 0 24 24">{t.art}</svg>
          </TaskButton>
        ))}
        <Tray>
          <svg width="14" height="14" fill="none" stroke="#eee" strokeWidth="1.500"><path d="M2 9l5-5 5 5" /></svg>
          <svg width="18" height="14" fill="none" stroke="#ddd"><path d="M6 4.500h9v6H6zM16.500 6v3M8 6l4 4M12 6l-4 4M2.500 2v3M5.500 2v3M1.500 5h5v2l-2.500 2zM4 9v3" /></svg>
          <svg width="15" height="14" fill="none" stroke="#bbb"><path d="M3 13A10 10 0 0 1 13 3M6 13a7 7 0 0 1 7-7M9 13a4 4 0 0 1 4-4" /><circle cx="12" cy="12" r="1" fill="#fff" /></svg>
          <svg width="16" height="14" fill="none" stroke="#eee"><path d="M1.500 5h2l4-3.500v11L3.500 9h-2zM10 5l4 4M14 5l-4 4" /></svg>
          <Clock>{"10:12\n02/06/2021"}</Clock>
          <svg width="18" height="17" viewBox="0 0 18 17"><path d="M1 1h15v11h-7l-3 4v-4H1z" fill="#f4f4f4" /><path d="M4 4h9M4 6.500h9M4 9h6" stroke="#333" /><circle cx="14" cy="12" r="3.500" fill="#ddd" stroke="#333" /></svg>
        </Tray>
        <BackWindow><span>hitkit: ams_4.10&nbsp; Tech: c35b4c3&nbsp; User: ist193783</span></BackWindow>
      </TaskBar>
    </Screen>
  );
}
